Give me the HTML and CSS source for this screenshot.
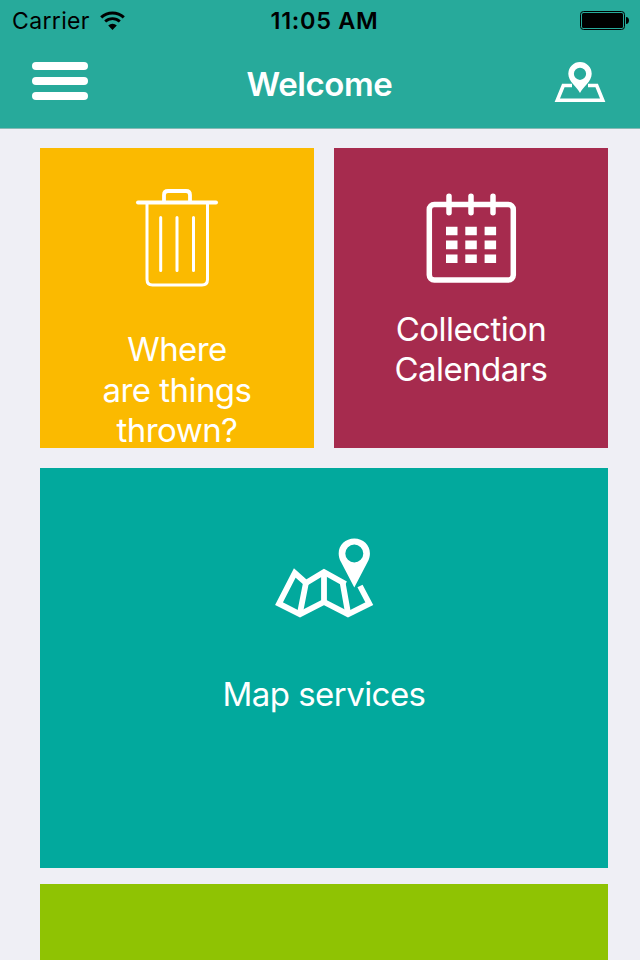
FILE: index.html
```
<!DOCTYPE html>
<html lang="en">
 <head>
  <title>Welcome</title>
  <meta charset="utf-8" />
  <link rel="stylesheet" href="styles.css">
 </head>

 <body>
	<header class="header">
		<div class="status">
			<div class="status-left">
				<span class="carrier">Carrier</span>
				<svg class="wifi" width="26" height="20" viewBox="100 10 26 20">
					<path d="M101.2 16.4a16.4 16.4 0 0 1 22.600 0" fill="none" stroke="#000" stroke-width="3"/>
					<path d="M105.2 20.6a10.6 10.6 0 0 1 14.600 0" fill="none" stroke="#000" stroke-width="2.8"/>
					<path d="M108.2 24.6a6 6 0 0 1 8.600 0l-4.300 4.400z" fill="#000"/>
				</svg>
			</div>
			<span class="time">11:05 AM</span>
			<div class="status-right">
				<svg class="battery" width="50" height="20" viewBox="580 11 50 20">
					<rect x="580.5" y="11.5" width="44" height="18" rx="3" fill="none" stroke="#000"/>
					<rect x="582" y="13" width="41" height="15" rx="1.5"/>
					<path d="M626 17c4 0 4 7 0 7z"/>
				</svg>
			</div>
		</div>
		<div class="nav">
			<div class="menu"><i></i><i></i><i></i></div>
			<h1 class="title">Welcome</h1>
			<svg class="nav-map" width="52" height="42" viewBox="554 61 52 42">
				<path d="M572 85.500h-8.700l-6 14.700h45.400l-6-14.700H588" fill="none" stroke="#fff" stroke-width="3.600"/>
				<path fill="#fff" fill-rule="evenodd" d="M580 93c-3-6-11.700-11.500-11.700-19.300a11.700 11.700 0 0 1 23.400 0C591.700 81.500 583 87 580 93zM580 67.700a6.100 6.100 0 1 0 0 12.200a6.100 6.100 0 1 0 0-12.200z"/>
			</svg>
		</div>
	</header>

	<main class="tiles">
		<section class="tile tile-trash">
			<svg class="icon" width="90" height="110" viewBox="132 183 90 110" fill="none" stroke="#fff" stroke-linecap="round">
				<path d="M138 202.500h78" stroke-width="4"/>
				<path d="M164 201v-6q0-4 4-4h18q4 0 4 4v6" stroke-width="3.800"/>
				<path d="M147 203v76.500q0 5.500 5.500 5.500h49.500q5.500 0 5.500-5.500v-76.500" stroke-width="3"/>
				<path d="M160.700 217.500v53M177 217.500v53M193.500 217.500v53" stroke-width="3"/>
			</svg>
			<p class="label">Where<br>are things<br>thrown?</p>
		</section>
		<section class="tile tile-calendar">
			<svg class="icon" width="94" height="94" viewBox="424 191 94 94">
				<rect x="429.300" y="204.500" width="84" height="75.500" rx="5" fill="none" stroke="#fff" stroke-width="5.500"/>
				<path d="M449 196.200v16.500M471 196.200v16.500M493 196.200v16.500" stroke="#fff" stroke-width="5.500" stroke-linecap="round"/>
				<path d="M446 226.700h11.500v8.600H446zM465.300 226.700h11.500v8.600h-11.500zM484.600 226.700h11.500v8.600h-11.500zM446 240.600h11.500v8.600H446zM465.300 240.600h11.500v8.600h-11.500zM484.600 240.600h11.500v8.600h-11.500zM446 254.400h11.500v8.600H446zM465.300 254.400h11.500v8.600h-11.500zM484.600 254.400h11.500v8.600h-11.500z" fill="#fff"/>
			</svg>
			<p class="label">Collection<br>Calendars</p>
		</section>
		<section class="tile tile-map">
			<svg class="icon" width="100" height="82" viewBox="274 537 100 82">
				<path d="M345.500 584L324 572L306 583L294.800 573L279 603.700L300 614.300L324 602L348 614.300L369.300 603.700L360 586" fill="none" stroke="#fff" stroke-width="5.800"/>
				<path d="M306 582.500L300 613M324 572v30M342.500 582L348 613" fill="none" stroke="#fff" stroke-width="5.800"/>
				<path fill="#fff" fill-rule="evenodd" d="M354.300 587.500L341 562c-6.500-12 1.500-23.500 13.300-23.500s19.800 11.500 13.300 23.500zM354.300 544.500a9 9 0 1 0 0 18a9 9 0 1 0 0-18z"/>
			</svg>
			<p class="label">Map services</p>
		</section>
		<section class="tile tile-green"></section>
	</main>
 </body>
</html>
```
FILE: styles.css
```
* {box-sizing: border-box; margin: 0; padding: 0;}
body {height: 960px; overflow: hidden; background: #efeff5; font-family: Inter, "Liberation Sans", sans-serif;}
svg {display: block; flex-shrink: 0;}

.header {height: 129px; background: #27aa9b; border-bottom: 1px solid #86b9b5;}
.status {display: grid; grid-template-columns: 1fr auto 1fr; height: 41px; padding: 1px 10px 0 12px; align-items: center; font-size: 23px; line-height: 40px;}
.status-left {display: flex; align-items: center; gap: 10px;}
.carrier {letter-spacing: 0.35px;}
.time {font-size: 23.5px; font-weight: 600; letter-spacing: 0.7px; padding-left: 7px;}
.status-right {display: flex; justify-content: flex-end;}
.nav {display: grid; grid-template-columns: 1fr auto 1fr; height: 87px; padding: 0 34px 0 32px; align-items: center;}
.menu {display: flex; flex-direction: column; gap: 7px; width: 56px; padding-bottom: 7px;}
.menu i {height: 8px; border-radius: 4px; background: #fff;}
.title {padding: 0 0 2px 1px; color: #fff; font-size: 33px; font-weight: 600; letter-spacing: -0.4px;}
.nav-map {justify-self: end; margin-bottom: 5px;}

.tiles {display: grid; grid-template-columns: 274px 274px; grid-template-rows: 300px 420px 92px; column-gap: 20px; padding: 19px 32px 0 40px;}
.tile {display: flex; flex-direction: column; align-items: center; color: #fff; overflow: hidden;}
.tile-trash {padding-top: 35px; background: #fbba00;}
.tile-calendar {padding-top: 43px; background: #a62b4e;}
.tile-map {grid-column: 1 / 3; margin-top: 20px; padding-top: 69px; background: #02a99d;}
.tile-green {grid-column: 1 / 3; margin-top: 16px; background: #8fc303;}
.label {font-size: 33px; line-height: 40.5px; letter-spacing: -0.55px; text-align: center; white-space: nowrap;}
.tile-trash .label {margin-top: 36px;}
.tile-calendar .label {margin-top: 24px; line-height: 40px;}
.tile-map .label {margin-top: 55px;}
```
